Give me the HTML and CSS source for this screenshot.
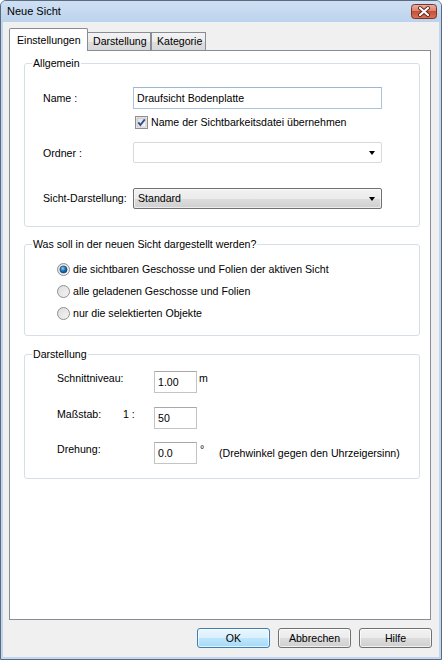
FILE: index.html
```html
<!DOCTYPE html>
<html lang="de">
<head>
<meta charset="utf-8">
<title>Neue Sicht</title>
<link rel="stylesheet" href="styles.css">
</head>
<body>
<div class="window">
  <div class="titlebar">
    <span class="title">Neue Sicht</span>
    <svg class="close" width="26" height="15" viewBox="0 0 26 15">
      <defs>
        <linearGradient id="cg" x1="0" y1="0" x2="0" y2="1">
          <stop offset="0" stop-color="#eab2a5"/>
          <stop offset="0.45" stop-color="#d98470"/>
          <stop offset="0.5" stop-color="#c75138"/>
          <stop offset="1" stop-color="#d8735a"/>
        </linearGradient>
      </defs>
      <rect x="0.5" y="0.5" width="25" height="14" rx="3" fill="url(#cg)" stroke="#7c3326"/>
      <path d="M9 4 L17 11 M17 4 L9 11" stroke="#5b2218" stroke-width="4" stroke-linecap="round"/>
      <path d="M9 4 L17 11 M17 4 L9 11" stroke="#ffffff" stroke-width="2.2" stroke-linecap="round"/>
    </svg>
  </div>
  <div class="client">
    <div class="tabs">
      <div class="tab selected">Einstellungen</div>
      <div class="tab second">Darstellung</div>
      <div class="tab third">Kategorie</div>
    </div>
    <div class="panel">
      <div class="group g1">
        <span class="legend">Allgemein</span>
        <div class="row r-name">
          <span class="label">Name :</span>
          <div class="input wide name-input">Draufsicht Bodenplatte</div>
        </div>
        <div class="row r-check">
          <span class="label"></span>
          <span class="check">
            <svg width="13" height="13" viewBox="0 0 13 13">
              <defs>
                <linearGradient id="chk" x1="0" y1="0" x2="1" y2="1">
                  <stop offset="0" stop-color="#dcdcdc"/>
                  <stop offset="1" stop-color="#fbfbfb"/>
                </linearGradient>
              </defs>
              <rect x="0.5" y="0.5" width="12" height="12" fill="#f4f4f4" stroke="#8e8f8f"/>
              <rect x="2" y="2" width="9" height="9" fill="url(#chk)" stroke="#b0b0b0" stroke-width="0.6"/>
              <path d="M3.3 6.4 L5.4 9 L9.8 3.4" fill="none" stroke="#2f4d8f" stroke-width="1.8"/>
            </svg>
          </span>
          <span class="check-text">Name der Sichtbarkeitsdatei übernehmen</span>
        </div>
        <div class="row r-ordner">
          <span class="label">Ordner :</span>
          <div class="combo wide plain"><span></span><i class="arrow"></i></div>
        </div>
        <div class="row r-sicht">
          <span class="label">Sicht-Darstellung:</span>
          <div class="combo wide button-like"><span>Standard</span><i class="arrow"></i></div>
        </div>
      </div>

      <div class="group g2">
        <span class="legend">Was soll in der neuen Sicht dargestellt werden?</span>
        <div class="radio-row">
          <svg class="radio" width="13" height="13" viewBox="0 0 13 13">
            <defs>
              <linearGradient id="rg" x1="0" y1="0" x2="1" y2="1">
                <stop offset="0" stop-color="#d8d8d8"/>
                <stop offset="1" stop-color="#fafafa"/>
              </linearGradient>
              <radialGradient id="dot" cx="0.4" cy="0.35" r="0.7">
                <stop offset="0" stop-color="#8fd0f5"/>
                <stop offset="0.5" stop-color="#1f73b8"/>
                <stop offset="1" stop-color="#0c3f73"/>
              </radialGradient>
            </defs>
            <circle cx="6.5" cy="6.5" r="6" fill="url(#rg)" stroke="#8f8f8f"/>
            <circle cx="6.5" cy="6.5" r="3.6" fill="url(#dot)" stroke="#163f6e" stroke-width="0.6"/>
          </svg>
          <span>die sichtbaren Geschosse und Folien der aktiven Sicht</span>
        </div>
        <div class="radio-row">
          <svg class="radio" width="13" height="13" viewBox="0 0 13 13">
            <circle cx="6.5" cy="6.5" r="6" fill="url(#rg)" stroke="#8f8f8f"/>
            <circle cx="6.5" cy="6.5" r="4" fill="none" stroke="#e6e6e6" stroke-width="0.8"/>
          </svg>
          <span>alle geladenen Geschosse und Folien</span>
        </div>
        <div class="radio-row">
          <svg class="radio" width="13" height="13" viewBox="0 0 13 13">
            <circle cx="6.5" cy="6.5" r="6" fill="url(#rg)" stroke="#8f8f8f"/>
            <circle cx="6.5" cy="6.5" r="4" fill="none" stroke="#e6e6e6" stroke-width="0.8"/>
          </svg>
          <span>nur die selektierten Objekte</span>
        </div>
      </div>

      <div class="group g3">
        <span class="legend">Darstellung</span>
        <div class="drow d1">
          <span class="dlabel">Schnittniveau:</span>
          <span class="dmid"></span>
          <div class="input small">1.00</div>
          <span class="unit">m</span>
        </div>
        <div class="drow d2">
          <span class="dlabel">Maßstab:</span>
          <span class="dmid">1 :</span>
          <div class="input small">50</div>
        </div>
        <div class="drow d3">
          <span class="dlabel">Drehung:</span>
          <span class="dmid"></span>
          <div class="input small">0.0</div>
          <span class="unit deg">°</span>
          <span class="hint">(Drehwinkel gegen den Uhrzeigersinn)</span>
        </div>
      </div>
    </div>
    <div class="buttons">
      <div class="btn default">OK</div>
      <div class="btn">Abbrechen</div>
      <div class="btn">Hilfe</div>
    </div>
  </div>
</div>
</body>
</html>
```

FILE: styles.css
```css
* { box-sizing: border-box; }

html, body {
  margin: 0;
  padding: 0;
  background: #ffffff;
}

body {
  font-family: "Liberation Sans", Arial, sans-serif;
  font-size: 10.6px;
  line-height: 13px;
  color: #000;
}

.window {
  width: 442px;
  height: 660px;
  border: 1px solid #5a6b80;
  border-radius: 6px 6px 0 0;
  background: #c2d7ef;
  display: flex;
  flex-direction: column;
  overflow: hidden;
}

.titlebar {
  height: 21px;
  flex: none;
  display: flex;
  align-items: center;
  justify-content: space-between;
  padding: 0 4px 0 6px;
  background: linear-gradient(#cfe0f4, #bcd3ec);
}

.title {
  font-size: 11px;
  color: #000;
}

.close { display: block; }

.client {
  flex: 1;
  margin: 0 2px 2px 2px;
  background: #f0f0f0;
  display: flex;
  flex-direction: column;
}

.tabs {
  display: flex;
  align-items: flex-end;
  height: 22px;
  margin: 6px 0 0 6px;
  position: relative;
  z-index: 1;
}

.tab {
  border: 1px solid #898c95;
  border-bottom: none;
  display: flex;
  align-items: center;
  white-space: nowrap;
}

.tab.selected {
  width: 79px;
  height: 23px;
  margin-bottom: -1px;
  background: #ffffff;
  padding-left: 7px;
  border-radius: 2px 2px 0 0;
}

.tab.second,
.tab.third {
  height: 18px;
  background: linear-gradient(#f3f3f3, #ebebeb 50%, #dedede 50%, #d9d9d9);
  padding-left: 5px;
}

.tab.second {
  width: 63px;
  border-left: none;
}

.tab.third {
  width: 55px;
}

.panel {
  margin-left: 6px;
  width: 422px;
  height: 570px;
  border: 1px solid #898c95;
  background: #ffffff;
  padding: 12px 10px 0 14px;
  display: flex;
  flex-direction: column;
}

.group {
  position: relative;
  width: 396px;
  border: 1px solid #d5dfe5;
  border-radius: 3px;
}

.legend {
  position: absolute;
  top: -7px;
  left: 7px;
  padding: 0 1px;
  background: #ffffff;
  white-space: nowrap;
}

.g1 {
  padding: 23px 0 17px 18px;
}

.g2 {
  margin-top: 17px;
  padding: 13px 0 11px 32px;
}

.g3 {
  margin-top: 18px;
  padding: 16px 0 14px 32px;
}

.row {
  display: flex;
  align-items: center;
}

.label {
  width: 90px;
  flex: none;
}

.r-name { height: 22px; }
.r-check { height: 13px; margin-top: 7px; }
.r-ordner { height: 21px; margin-top: 13px; }
.r-sicht { height: 21px; margin-top: 25px; }

.r-ordner .label { padding-top: 2px; }

.input {
  background: #ffffff;
  border: 1px solid #c4c4c4;
  border-top-color: #a8a8a8;
  display: flex;
  align-items: center;
  padding-left: 3px;
  white-space: nowrap;
}

.wide { width: 249px; }

.name-input {
  height: 22px;
  border-color: #a9c4e2;
  border-top-color: #9bb7d8;
}

.check {
  display: flex;
  margin-left: 2px;
}

.check svg { display: block; }

.check-text {
  margin-left: 3px;
  white-space: nowrap;
}

.combo {
  height: 21px;
  display: flex;
  align-items: center;
  justify-content: space-between;
  padding: 0 6px 0 4px;
  border-radius: 2px;
}

.combo.plain {
  background: #ffffff;
  border: 1px solid #d9d9d9;
}

.combo.button-like {
  border: 1px solid #707070;
  background: linear-gradient(#f2f2f2, #ebebeb 50%, #dddddd 50%, #cfcfcf);
  box-shadow: inset 0 0 0 1px rgba(255, 255, 255, 0.6);
}

.arrow {
  width: 0;
  height: 0;
  border-left: 3.5px solid transparent;
  border-right: 3.5px solid transparent;
  border-top: 4px solid #000;
}

.radio-row {
  height: 22px;
  display: flex;
  align-items: center;
}

.radio {
  display: block;
  flex: none;
  margin-right: 3px;
}

.drow {
  display: flex;
  align-items: flex-start;
  height: 22px;
}

.d2 { margin-top: 14px; }
.d3 { margin-top: 13px; }

.dlabel {
  width: 66px;
  flex: none;
  padding-top: 1px;
}

.dmid {
  width: 31px;
  flex: none;
  padding-top: 1px;
}

.input.small {
  width: 43px;
  height: 22px;
}

.unit {
  margin-left: 2px;
  padding-top: 1px;
}

.unit.deg {
  margin-left: 3px;
  width: 19px;
}

.hint {
  align-self: center;
  white-space: nowrap;
}

.buttons {
  display: flex;
  justify-content: flex-end;
  gap: 8px;
  margin-top: 8px;
  padding-right: 7px;
}

.btn {
  width: 73px;
  height: 20px;
  border: 1px solid #707070;
  border-radius: 3px;
  background: linear-gradient(#f2f2f2, #ebebeb 50%, #dddddd 50%, #cfcfcf);
  box-shadow: inset 0 0 0 1px rgba(255, 255, 255, 0.7);
  display: flex;
  align-items: center;
  justify-content: center;
}

.btn.default {
  border-color: #3c7fb1;
  background: linear-gradient(#eaf6fd, #d9f0fc 50%, #bee6fd 50%, #a7d9f5);
}
```
